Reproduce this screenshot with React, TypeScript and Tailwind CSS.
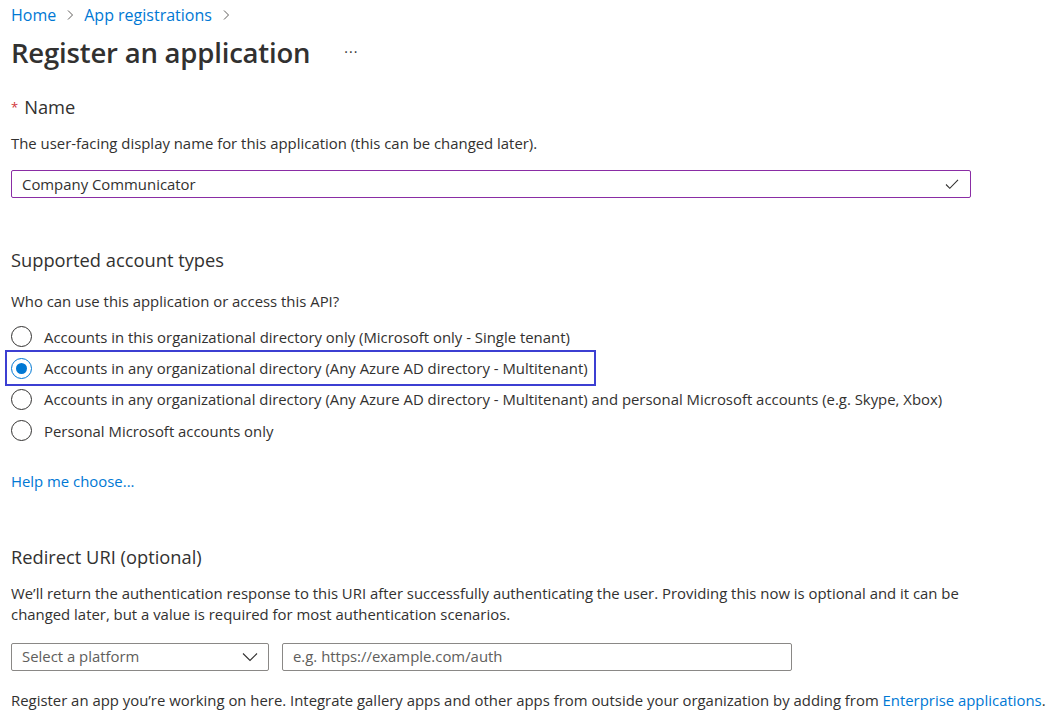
import { useState } from 'react';

const options = [
  'Accounts in this organizational directory only (Microsoft only - Single tenant)',
  'Accounts in any organizational directory (Any Azure AD directory - Multitenant)',
  'Accounts in any organizational directory (Any Azure AD directory - Multitenant) and personal Microsoft accounts (e.g. Skype, Xbox)',
  'Personal Microsoft accounts only',
];

const Chevron = () => (
  <svg width="8" height="12" viewBox="0 0 8 12" className="text-[#605e5c]" aria-hidden="true">
    <path d="M2 1.5 6.5 6 2 10.5" fill="none" stroke="currentColor" strokeWidth="1" />
  </svg>
);

const App = () => {
  const [selected, setSelected] = useState(1);

  return (
    <div className="min-h-[724px] w-[1062px] bg-white pl-[11px] text-[#323130] font-['Open_Sans',sans-serif] text-[14.9px]">
      {/* Breadcrumb */}
      <nav className="flex h-[28px] items-center gap-[10px] pt-[1px] text-[16px] text-[#0078d4]">
        <a href="#">Home</a>
        <Chevron />
        <a href="#">App registrations</a>
        <Chevron />
      </nav>

      <div className="flex h-[50px] items-center">
        <h1 className="text-[27.5px] font-semibold tracking-[-0.2px] text-[#323130]">Register an application</h1>
        <span className="ml-[34px] mt-[-4px] text-[14px] tracking-[1px] text-[#323130]">···</span>
      </div>

      {/* Name */}
      <div className="mt-[17px] flex items-center gap-[6px] text-[18.3px] leading-[24px]">
        <span className="text-[13px] text-[#d13438]">*</span>
        <span>Name</span>
      </div>
      <p className="mt-[14px] leading-[20px]">
        The user-facing display name for this application (this can be changed later).
      </p>
      <div className="mt-[17px] flex h-[28px] w-[960px] items-center justify-between rounded-[2px] border border-[#8a2da5] pl-[10px] pr-[11px]">
        <span>Company Communicator</span>
        <svg width="14" height="12" viewBox="0 0 14 12" aria-hidden="true">
          <path d="M1 6.5 4.8 10.3 13 1.8" fill="none" stroke="#323130" strokeWidth="1.1" />
        </svg>
      </div>

      {/* Supported account types */}
      <h2 className="mt-[50px] text-[18.3px] leading-[24px]">Supported account types</h2>
      <p className="mt-[19px] leading-[20px]">Who can use this application or access this API?</p>
      <div className="mt-[10px] flex flex-col" role="radiogroup">
        {options.map((label, i) => (
          <label
            key={label}
            className={`-ml-[4px] flex h-[31.4px] w-fit cursor-pointer items-center gap-[12px] pl-[4px] pr-[6px] ${
              i === 1 ? 'outline-2 outline-[#3c3fd2] -outline-offset-[0.5px]' : ''
            }`}
            onClick={() => setSelected(i)}
          >
            <span
              className={`flex h-[21px] w-[21px] shrink-0 items-center justify-center rounded-full border ${
                selected === i ? 'border-[#0078d4]' : 'border-[#323130]'
              }`}
            >
              {selected === i && <span className="h-[11px] w-[11px] rounded-full bg-[#0078d4]" />}
            </span>
            <span className="leading-[20px]">{label}</span>
          </label>
        ))}
      </div>

      <a href="#" className="mt-[24px] block w-fit leading-[20px] text-[#0078d4]">
        Help me choose...
      </a>

      {/* Redirect URI */}
      <h2 className="mt-[54px] text-[18.3px] leading-[24px]">Redirect URI (optional)</h2>
      <p className="mt-[14px] w-[950px] leading-[21px]">
        We’ll return the authentication response to this URI after successfully authenticating the user. Providing this
        now is optional and it can be changed later, but a value is required for most authentication scenarios.
      </p>
      <div className="mt-[18px] flex gap-[13px]">
        <div className="flex h-[28px] w-[258px] items-center justify-between rounded-[2px] border border-[#8a8886] pl-[10px] pr-[10px] text-[#605e5c]">
          <span>Select a platform</span>
          <svg width="16" height="10" viewBox="0 0 16 10" aria-hidden="true">
            <path d="M1 1.5 8 8.5 15 1.5" fill="none" stroke="#323130" strokeWidth="1.1" />
          </svg>
        </div>
        <div className="flex h-[28px] w-[510px] items-center rounded-[2px] border border-[#8a8886] pl-[10px] text-[#605e5c]">
          e.g. https://example.com/auth
        </div>
      </div>

      <p className="mt-[19px] leading-[20px] whitespace-nowrap">
        Register an app you’re working on here. Integrate gallery apps and other apps from outside your organization by
        adding from{' '}
        <a href="#" className="text-[#0078d4]">
          Enterprise applications
        </a>
        .
      </p>
    </div>
  );
};

export default App;
